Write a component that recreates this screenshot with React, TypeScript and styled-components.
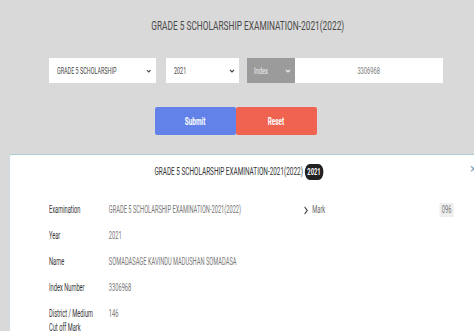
import styled, { createGlobalStyle } from 'styled-components';

const GlobalStyle = createGlobalStyle`
  html, body {
    margin: 0;
    padding: 0;
    background: #d9d9d9;
    overflow: hidden;
  }
  * {
    box-sizing: border-box;
  }
`;

const FONT = `Roboto, "Liberation Sans", sans-serif`;
// the text in the picture is narrow, so text gets squeezed sideways
const SQUEEZE = 0.64;
const DETAIL_SQUEEZE = 0.57;

const ROWS = [
  { label: 'Examination', value: 'GRADE 5 SCHOLARSHIP EXAMINATION-2021(2022)', mark: true },
  { label: 'Year', value: '2021' },
  { label: 'Name', value: 'SOMADASAGE KAVINDU MADUSHAN SOMADASA' },
  { label: 'Index Number', value: '3306968' },
  { label: 'District / Medium\nCut off Mark', value: '146' },
];

const col = (px: number) => `${Math.round(px / DETAIL_SQUEEZE)}px`;

function Chevron() {
  return (
    <svg width="12" height="9" viewBox="0 0 12 9">
      <path d="M3.5 1 L8 4.5 L3.5 8" fill="none" stroke="#333" strokeWidth="1.5" />
    </svg>
  );
}

function Caret() {
  return (
    <svg width="6" height="4" viewBox="0 0 6 4">
      <path d="M1 1 L3 3 L5 1" fill="none" stroke="currentColor" strokeWidth="1.1" />
    </svg>
  );
}

function App() {
  return (
    <Page>
      <GlobalStyle />
      <Title>
        <Squeeze origin="center">GRADE 5 SCHOLARSHIP EXAMINATION-2021(2022)</Squeeze>
      </Title>

      <FormRow>
        <Select width={107}>
          <SelectText>GRADE 5 SCHOLARSHIP</SelectText>
          <Caret />
        </Select>
        <Select width={73}>
          <SelectText>2021</SelectText>
          <Caret />
        </Select>
        <IndexGroup>
          <Addon>
            <SelectText>Index</SelectText>
            <Caret />
          </Addon>
          <IndexInput>
            <Squeeze origin="center">3306968</Squeeze>
          </IndexInput>
        </IndexGroup>
      </FormRow>

      <Buttons>
        <Button color="#6282e9">
          <Squeeze origin="center">Submit</Squeeze>
        </Button>
        <Button color="#ef6350">
          <Squeeze origin="center">Reset</Squeeze>
        </Button>
      </Buttons>

      <Card>
        <CardTitle>
          <CardTitleInner>
            GRADE 5 SCHOLARSHIP EXAMINATION-2021(2022) <Badge>2021</Badge>
          </CardTitleInner>
        </CardTitle>
        <Close>×</Close>

        <Details>
          {ROWS.map((row) => (
            <DetailRow key={row.label}>
              <Label>{row.label}</Label>
              <Value>{row.value}</Value>
              {row.mark ? (
                <>
                  <MarkLabel>
                    <Chevron /> Mark
                  </MarkLabel>
                  <MarkValue>096</MarkValue>
                </>
              ) : null}
            </DetailRow>
          ))}
        </Details>
      </Card>
    </Page>
  );
}

export default App;

const Page = styled.div`
  width: 474px;
  height: 331px;
  overflow: hidden;
  font-family: ${FONT};
  display: flex;
  flex-direction: column;
  align-items: center;
`;

const Squeeze = styled.span<{ origin: string }>`
  display: inline-block;
  white-space: nowrap;
  transform: scaleX(${SQUEEZE});
  transform-origin: ${({ origin }) => origin} center;
`;

const SelectText = styled.span`
  flex: 0 1 auto;
  min-width: 0;
  white-space: nowrap;
  transform: scaleX(${SQUEEZE});
  transform-origin: left center;
`;

const Title = styled.h1`
  margin: 18px 0 0 22px;
  font-size: 13px;
  font-weight: 400;
  line-height: 16px;
  color: #4a4a4a;
  white-space: nowrap;
`;

const FormRow = styled.div`
  display: flex;
  align-items: center;
  align-self: flex-start;
  margin: 24px 0 0 49px;
`;

const Select = styled.div<{ width: number }>`
  display: flex;
  align-items: center;
  justify-content: space-between;
  gap: 4px;
  width: ${({ width }) => width}px;
  height: 25px;
  padding: 0 4px 0 8px;
  margin-right: 10px;
  background: #fff;
  color: #444;
  font-size: 8.5px;

  & + & {
    margin-right: 8px;
  }
`;

const IndexGroup = styled.div`
  display: flex;
  width: 196px;
  height: 25px;
`;

const Addon = styled.div`
  display: flex;
  align-items: center;
  justify-content: space-between;
  width: 48px;
  padding: 0 4px 0 7px;
  background: #9b9b9b;
  color: #f0f0f0;
  font-size: 9px;
`;

const IndexInput = styled.div`
  flex: 1;
  display: flex;
  align-items: center;
  justify-content: center;
  background: #fff;
  color: #777;
  font-size: 9px;
`;

const Buttons = styled.div`
  display: flex;
  margin: 24px 0 0 -3px;
`;

const Button = styled.button<{ color: string }>`
  width: 81px;
  height: 28px;
  padding: 0;
  border: none;
  border-radius: 2px;
  background: ${({ color }) => color};
  color: #fff;
  font-family: ${FONT};
  font-size: 10px;
  font-weight: 700;
`;

const Card = styled.section`
  position: relative;
  align-self: flex-start;
  margin: 19px 0 0 9px;
  width: 480px;
  flex: 1;
  background: #fff;
  border-top: 1px solid #a9cdd7;
  border-left: 1px solid #c9dde2;
  border-radius: 3px 0 0 0;
`;

const CardTitle = styled.div`
  display: flex;
  justify-content: center;
  margin-top: 8px;
  padding-right: 22px;
`;

const CardTitleInner = styled.div`
  display: flex;
  align-items: center;
  gap: 3px;
  height: 17px;
  font-size: 10px;
  color: #333;
  white-space: nowrap;
  transform: scaleX(${SQUEEZE});
  transform-origin: center;
`;

const Badge = styled.span`
  display: inline-flex;
  align-items: center;
  justify-content: center;
  height: 16px;
  padding: 0 4px;
  border-radius: 8px;
  background: #222;
  color: #fff;
  font-size: 9px;
  font-weight: 700;
`;

const Close = styled.span`
  position: absolute;
  top: 6px;
  left: 460px;
  font-size: 13px;
  color: #7ea3c4;
`;

const Details = styled.div`
  display: flex;
  flex-direction: column;
  gap: 11px;
  margin: 23px 0 0 39px;
  transform: scaleX(${DETAIL_SQUEEZE});
  transform-origin: left top;
`;

const DetailRow = styled.div`
  display: grid;
  grid-template-columns: ${col(60)} ${col(194)} ${col(137)} auto;
  align-items: start;
  min-height: 15px;
  font-size: 10px;
  line-height: 14px;
`;

const Label = styled.div`
  color: #333;
  white-space: pre-line;
`;

const Value = styled.div`
  color: #777;
  white-space: nowrap;
`;

const MarkLabel = styled.div`
  display: flex;
  align-items: center;
  gap: 5px;
  color: #666;
`;

const MarkValue = styled.div`
  justify-self: start;
  padding: 0 4px;
  background: #eee;
  color: #777;
`;
